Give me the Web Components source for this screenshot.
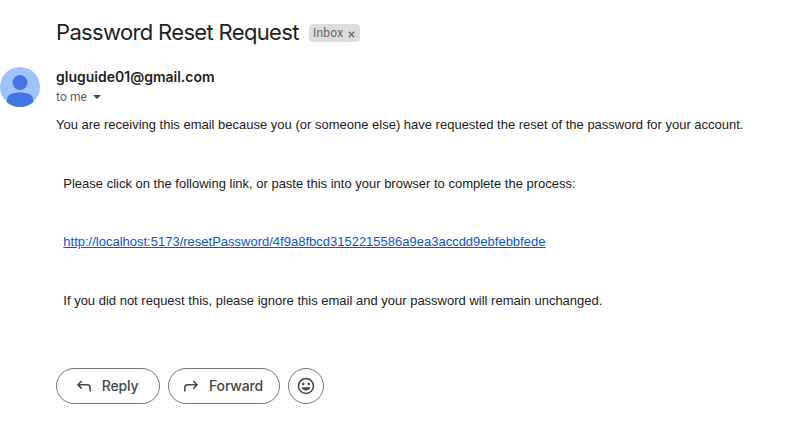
<!DOCTYPE html>
<html lang="en">
<head>
<meta charset="utf-8">
<title>Password Reset Request</title>
<style>
body { margin: 0; background: #fff; overflow: hidden; }
</style>
</head>
<body>
<mail-message></mail-message>
<script>
const define = (name, html) => {
  const template = document.createElement('template');
  template.innerHTML = html;
  customElements.define(name, class extends HTMLElement {
    constructor() {
      super();
      this.attachShadow({ mode: 'open' }).append(template.content.cloneNode(true));
    }
  });
};

define('mail-label', `
<style>
:host { display: flex; align-items: center; box-sizing: border-box; width: 51px; height: 18px; padding: 0 5px 0 4px;
  border-radius: 4px; background: #ddd; color: #666; font: 12px/18px Roboto, sans-serif; letter-spacing: .22px; justify-content: space-between; }
svg { width: 7px; height: 7px; margin-top: 2px; }
</style>
<span><slot></slot></span>
<svg viewBox="0 0 7 7"><path d="M.8.8l5.400 5.400M6.200.8L.8 6.200" stroke="#666" stroke-width="1.300"/></svg>`);

define('mail-subject', `
<style>
:host { display: flex; align-items: center; gap: 10px; height: 28px; }
h1 { margin: -2px 0 0; width: 243px; white-space: nowrap; font: 400 22px/28px Inter, sans-serif; letter-spacing: -.66px; color: #1f1f1f; }
</style>
<h1><slot></slot></h1><slot name="label"></slot>`);

define('user-avatar', `
<style>:host { display: block; width: 40px; height: 40px; } svg { display: block; }</style>
<svg width="40" height="40" viewBox="0 0 40 40">
<defs><clipPath id="c"><circle cx="20" cy="20" r="20"/></clipPath></defs>
<g clip-path="url(#c)"><path fill="#a0c3ff" d="M0 0h40v40H0z"/>
<circle cx="20" cy="15.500" r="7.500" fill="#4374e0"/>
<path fill="#4374e0" d="M7 32c0-4.500 6-6.500 13-6.500s13 2 13 6.500v8H7z"/></g></svg>`);

define('mail-sender', `
<style>
:host { display: grid; grid-template-columns: 40px 1fr; column-gap: 16px; height: 40px; }
.who { font: 600 14px/20px Inter, sans-serif; letter-spacing: 0; color: #1f1f1f; }
.to { display: flex; align-items: center; gap: 6px; font: 12px/20px Roboto, sans-serif; letter-spacing: .1px; color: #5e5e5e; }
</style>
<user-avatar></user-avatar>
<div><div class="who"><span><slot></slot></span></div>
<div class="to"><span><slot name="to"></slot></span><svg width="8" height="4" viewBox="0 0 8 4"><path d="M0 0h8L4 4z" fill="#444746"/></svg></div></div>`);

define('mail-body', `
<style>
:host { display: block; font: 13px/20px "Liberation Sans", Arial, sans-serif; color: #222; white-space: nowrap; }
::slotted(p) { margin: 0 0 38.500px 7.300px; }
::slotted(p:first-child) { margin-left: 0; }
</style><slot></slot>`);

define('mail-button', `
<style>
:host { display: flex; box-sizing: border-box; height: 36px; align-items: center; justify-content: center; gap: 8px;
  border: 1px solid #747775; border-radius: 18px; color: #444746; font: 500 14px/20px Inter, sans-serif; letter-spacing: -.15px; }
</style><slot name="icon"></slot><slot></slot>`);

define('mail-message', `
<style>
:host { display: block; padding-top: 19px; }
mail-subject, mail-body, .actions { margin-left: 56px; }
mail-sender { margin-top: 20px; }
mail-body { margin-top: 8px; height: 253px; }
a { color: #15c; text-decoration: underline; }
svg { display: block; }
.actions { display: flex; gap: 8px; }
.reply, .forward { padding-right: 4px; }
.reply { width: 104px; } .forward { width: 112px; } .react { width: 36px; }
</style>
<mail-subject><span>Password Reset Request</span><mail-label slot="label">Inbox</mail-label></mail-subject>
<mail-sender>gluguide01@gmail.com<span slot="to">to me</span></mail-sender>
<mail-body>
<p><span>You are receiving this email because you (or someone else) have requested the reset of the password for your account.</span></p>
<p><span>Please click on the following link, or paste this into your browser to complete the process:</span></p>
<p><a href="#">http://localhost:5173/resetPassword/4f9a8fbcd3152215586a9ea3accdd9ebfebbfede</a></p>
<p><span>If you did not request this, please ignore this email and your password will remain unchanged.</span></p>
</mail-body>
<div class="actions">
<mail-button class="reply"><svg slot="icon" width="20" height="20" viewBox="0 0 20 20" fill="none" stroke="#444746" stroke-width="1.500"><path d="M7.700 5L3.900 8.800l3.800 3.800M4 8.800h9a3.200 3.200 0 0 1 3.200 3.200v3.400"/></svg><span>Reply</span></mail-button>
<mail-button class="forward"><svg slot="icon" width="20" height="20" viewBox="0 0 20 20" fill="none" stroke="#444746" stroke-width="1.500"><path d="M12.300 5l3.800 3.800-3.800 3.800M16 8.800H7A3.200 3.200 0 0 0 3.800 12v3.400"/></svg><span>Forward</span></mail-button>
<mail-button class="react"><svg slot="icon" width="20" height="20" viewBox="0 0 20 20"><circle cx="10" cy="10" r="7.500" fill="none" stroke="#444746" stroke-width="1.600"/><circle cx="7.200" cy="8" r="1.250" fill="#444746"/><circle cx="12.800" cy="8" r="1.250" fill="#444746"/><path d="M5.700 11.300h8.600a4.500 4.500 0 0 1-8.600 0z" fill="#444746"/></svg></mail-button>
</div>`);
</script>
</body>
</html>
